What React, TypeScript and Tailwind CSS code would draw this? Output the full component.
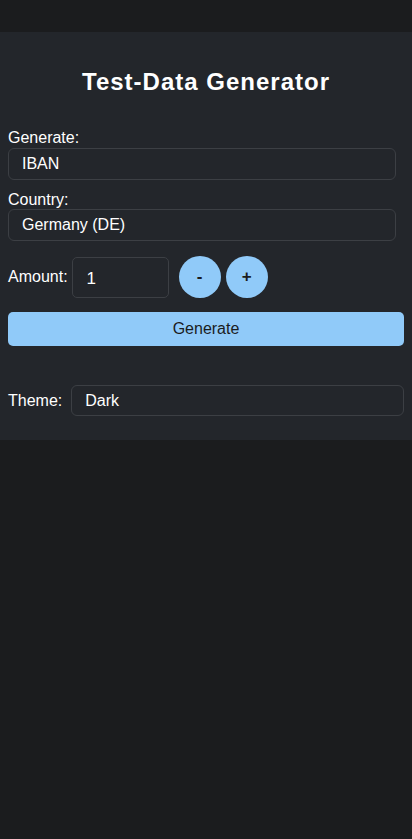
import React from "react";

export default function App() {
  return (
    <div className="min-h-[839px] w-full bg-[#1b1c1e] pt-[32px] text-white" style={{ fontFamily: '"Liberation Sans", Arial, sans-serif' }}>
      <div className="bg-[#23262b] px-[8px] pb-[24px] pt-[36px]">
        <h1 className="text-center text-[24px] font-bold leading-[28px] tracking-[1px]">Test-Data Generator</h1>
        <div className="mt-[33px] text-[16px] leading-[18px]">Generate:</div>
        <div className="mt-[1px] flex h-[32px] w-[388px] items-center rounded-[6px] border border-[#3c3f44] bg-[#23262b] pl-[13px] text-[16px]">IBAN</div>
        <div className="mt-[11px] text-[16px] leading-[18px]">Country:</div>
        <div className="flex h-[32px] w-[388px] items-center rounded-[6px] border border-[#3c3f44] bg-[#23262b] pl-[13px] text-[16px]">Germany (DE)</div>
        <div className="mt-[15px] flex items-center">
          <span className="text-[16px]">Amount:</span>
          <div className="ml-[4px] flex h-[41px] w-[97px] items-start rounded-[5px] border border-[#3c3f44] pl-[14px] pt-[8px] text-[17px]">1</div>
          <button className="ml-[10px] flex h-[42px] w-[42px] items-center justify-center rounded-full bg-[#90caf9] text-[17px] font-bold text-[#1b1c1e]">-</button>
          <button className="ml-[5px] flex h-[42px] w-[42px] items-center justify-center rounded-full bg-[#90caf9] text-[17px] font-bold text-[#1b1c1e]">+</button>
        </div>
        <button className="mt-[14px] flex h-[34px] w-full items-center justify-center rounded-[5px] bg-[#90caf9] text-[16px] text-[#1b1c1e]">Generate</button>
        <div className="mt-[39px] flex items-center">
          <span className="text-[16px]">Theme:</span>
          <div className="ml-[9px] flex h-[31px] flex-1 items-center rounded-[6px] border border-[#3c3f44] pl-[13px] text-[16px]">Dark</div>
        </div>
      </div>
    </div>
  );
}
